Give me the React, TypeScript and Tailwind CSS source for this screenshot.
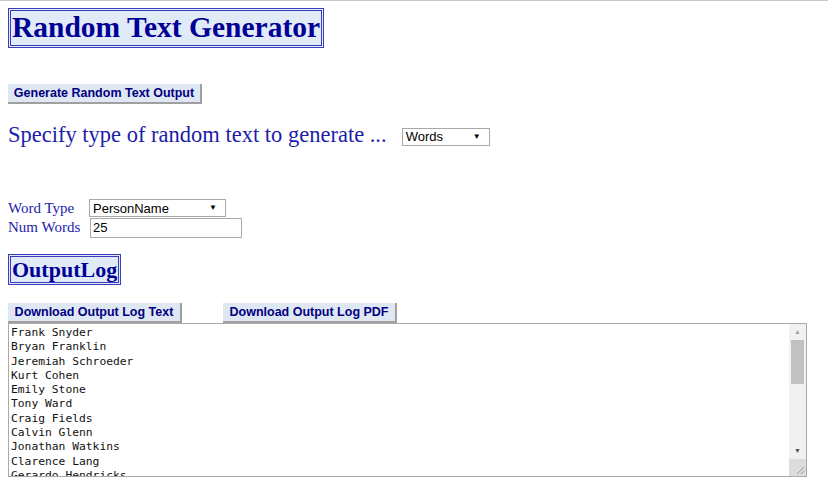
import React from 'react';

const names = [
  'Frank Snyder',
  'Bryan Franklin',
  'Jeremiah Schroeder',
  'Kurt Cohen',
  'Emily Stone',
  'Tony Ward',
  'Craig Fields',
  'Calvin Glenn',
  'Jonathan Watkins',
  'Clarence Lang',
  'Gerardo Hendricks',
];

const SoftButton: React.FC<{ children: React.ReactNode; className?: string }> = ({ children, className = '' }) => (
  <button
    className={`h-[20px] px-[4px] whitespace-nowrap bg-[#dfe7f3] border-r-2 border-b-2 border-[#a0a0a0] text-[#000080] font-bold text-[12.5px] leading-none font-['Liberation_Sans',Arial,sans-serif] ${className}`}
  >
    {children}
  </button>
);

const FakeSelect: React.FC<{ value: string; className?: string }> = ({ value, className = '' }) => (
  <div
    className={`flex items-center justify-between h-[18px] bg-white border border-[#a9a9a9] pl-[3px] pr-[8px] text-[13px] text-black font-['Liberation_Sans',Arial,sans-serif] ${className}`}
  >
    <span>{value}</span>
    <span className="text-[8px]">▼</span>
  </div>
);

export default function App() {
  return (
    <div className="min-h-[497px] w-[828px] bg-white border-t border-[#c8c8c8] font-['Liberation_Serif','Times_New_Roman',serif]">
      <div className="px-[8px] pt-[7px]">
        {/* Title */}
        <div className="flex">
          <h1 className="h-[40px] px-[1px] flex items-center bg-[#e1eaf7] border-[3px] border-double border-[#3b3bbd] text-[#000096] font-bold text-[29.5px] leading-none">
            Random Text Generator
          </h1>
        </div>

        <div className="mt-[36px] flex">
          <SoftButton className="w-[194px]">Generate Random Text Output</SoftButton>
        </div>

        <div className="mt-[18px] flex items-center h-[26px]">
          <span className="text-[#1c1caa] text-[22.5px] leading-none">Specify type of random text to generate ...</span>
          <FakeSelect value="Words" className="ml-[15px] w-[88px] mt-[3px]" />
        </div>

        {/* Options */}
        <div className="mt-[51px] text-[#1c1caa] text-[15px] leading-none">
          <div className="flex items-center h-[18px]">
            <span className="w-[81px]">Word Type</span>
            <FakeSelect value="PersonName" className="w-[137px]" />
          </div>
          <div className="flex items-center h-[21px]">
            <span className="w-[82px]">Num Words</span>
            <div className="w-[152px] h-[20px] bg-white border border-[#a9a9a9] pl-[2px] flex items-center text-[13px] text-black font-['Liberation_Sans',Arial,sans-serif]">
              25
            </div>
          </div>
        </div>

        {/* Output log */}
        <div className="mt-[16px] flex">
          <h2 className="h-[31px] px-[1px] flex items-center bg-[#e1eaf7] border-[3px] border-double border-[#3b3bbd] text-[#000096] font-bold text-[22px] leading-none">
            OutputLog
          </h2>
        </div>

        <div className="mt-[18px] flex">
          <SoftButton className="w-[174px]">Download Output Log Text</SoftButton>
          <SoftButton className="w-[174px] ml-[41px]">Download Output Log PDF</SoftButton>
        </div>

        <div className="w-[799px] h-[154px] border border-[#a9a9a9] flex bg-white">
          <div className="flex-1 overflow-hidden pl-[2px] pt-[2px] font-['DejaVu_Sans_Mono',monospace] text-[11.3px] leading-[14.3px] text-[#111]">
            {names.map((n) => (
              <div key={n} className="whitespace-pre">{n}</div>
            ))}
          </div>
          <div className="w-[17px] flex flex-col bg-[#f1f1f1]">
            <div className="h-[16px] flex items-center justify-center text-[7px] text-[#a3a3a3]">▲</div>
            <div className="mx-[2px] h-[44px] bg-[#c1c1c1]" />
            <div className="flex-1" />
            <div className="h-[16px] flex items-center justify-center text-[7px] text-[#505050]">▼</div>
            <div className="h-[17px] bg-[#dcdcdc] relative">
              <svg width="17" height="17" viewBox="0 0 17 17" className="absolute inset-0">
                <line x1="15" y1="8" x2="8" y2="15" stroke="#999" strokeWidth="1" />
                <line x1="15" y1="12" x2="12" y2="15" stroke="#999" strokeWidth="1" />
              </svg>
            </div>
          </div>
        </div>
      </div>
    </div>
  );
}
